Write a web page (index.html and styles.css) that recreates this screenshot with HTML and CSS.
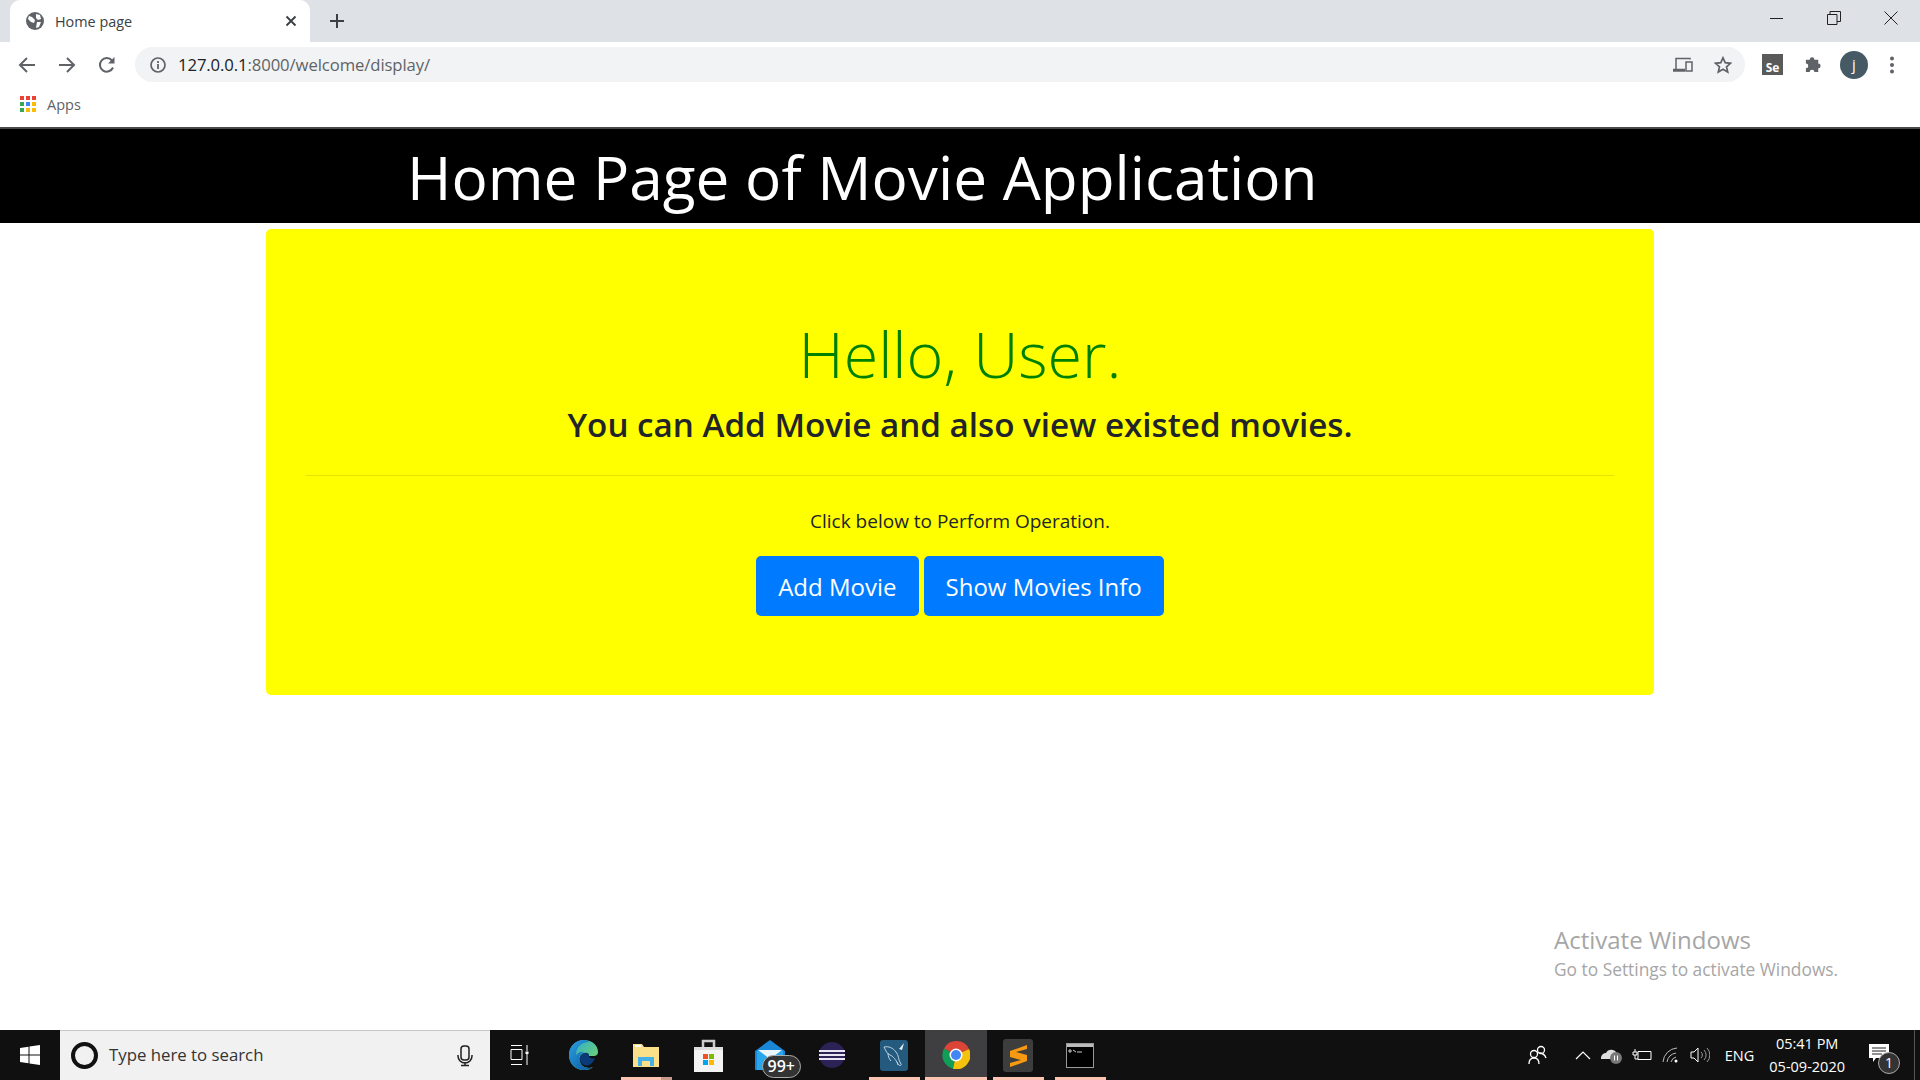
FILE: index.html
```html
<!DOCTYPE html>
<html lang="en">
<head>
  <meta charset="UTF-8">
  <title>Home page</title>
  <link rel="stylesheet" href="styles.css">
</head>
<body>
  <div class="tabstrip">
    <div class="tab">
      <svg class="tab-globe" width="18" height="18" viewBox="0 0 18 18"><circle cx="9" cy="9" r="9" fill="#5f6368"/><path d="M3 4l3 1 3 3-1 3-3-1-3-3zM10 2l4 1 1 4-3 1-2-2zM11 10l4 0-2 5-3 1z" fill="#fff"/></svg>
      <span class="tab-title">Home page</span>
      <svg class="tab-close" width="12" height="12" viewBox="0 0 12 12"><path d="M1.500 1.500l9 9M10.500 1.500l-9 9" stroke="#3c4043" stroke-width="1.900"/></svg>
    </div>
    <svg class="new-tab" width="16" height="16" viewBox="0 0 16 16"><path d="M8 1v14M1 8h14" stroke="#3c4043" stroke-width="2"/></svg>
    <div class="window-btns">
      <svg width="14" height="14" viewBox="0 0 14 14"><path d="M0 7.500h13" stroke="#222" stroke-width="1"/></svg>
      <svg width="14" height="14" viewBox="0 0 14 14"><path d="M.5 3.500h9.500v10H.5zM3 3.500V.5h10.500v10H10" fill="none" stroke="#222"/></svg>
      <svg width="14" height="14" viewBox="0 0 14 14"><path d="M.5.5l13 13M13.500.5l-13 13" stroke="#222"/></svg>
    </div>
  </div>

  <div class="toolbar">
    <svg class="nav-icon" width="18" height="18" viewBox="0 0 18 18"><path d="M17 9H2M9 2L2 9l7 7" fill="none" stroke="#5f6368" stroke-width="2"/></svg>
    <svg class="nav-icon" width="18" height="18" viewBox="0 0 18 18"><path d="M1 9h15M9 2l7 7-7 7" fill="none" stroke="#5f6368" stroke-width="2"/></svg>
    <svg class="nav-icon" width="18" height="18" viewBox="0 0 18 18"><path d="M15 11.500A6.800 6.800 0 1 1 14 4.500" fill="none" stroke="#5f6368" stroke-width="2"/><path d="M16.500 1v6.500H10z" fill="#5f6368"/></svg>
    <div class="omnibox">
      <svg width="16" height="16" viewBox="0 0 16 16"><circle cx="8" cy="8" r="7" fill="none" stroke="#5f6368" stroke-width="1.700"/><path d="M8 7v5M8 4v2" stroke="#5f6368" stroke-width="1.800"/></svg>
      <span class="url"><span class="url-host">127.0.0.1</span>:8000/welcome/display/</span>
      <span class="omni-icons">
        <svg width="20" height="16" viewBox="0 0 20 16"><path d="M17 2.500V1.500H3v11H.5v1.500H12M3 12.500h9" fill="none" stroke="#5f6368" stroke-width="1.500"/><rect x="13" y="5" width="6" height="9" fill="none" stroke="#5f6368" stroke-width="1.500"/></svg>
        <svg width="18" height="18" viewBox="0 0 18 18"><path d="M9 1.800l2.200 4.900 5.300.6-4 3.500 1.200 5.300L9 13.300l-4.700 2.800 1.200-5.300-4-3.500 5.300-.6z" fill="none" stroke="#5f6368" stroke-width="1.700"/></svg>
      </span>
    </div>
    <div class="ext-icons">
      <span class="se-icon">Se</span>
      <svg width="20" height="20" viewBox="0 0 20 20"><path d="M2 6h4a2.500 2.500 0 0 1 5 0h4v4a2.500 2.500 0 0 1 0 5v4h-4a2.500 2.500 0 0 0-5 0H2v-4a2.500 2.500 0 0 0 0-5z" fill="#5f6368" transform="translate(1 -1) scale(.95)"/></svg>
      <span class="avatar">j</span>
      <svg width="6" height="18" viewBox="0 0 6 18"><circle cx="3" cy="2.500" r="2" fill="#5f6368"/><circle cx="3" cy="9" r="2" fill="#5f6368"/><circle cx="3" cy="15.500" r="2" fill="#5f6368"/></svg>
    </div>
  </div>

  <div class="bookmarks">
    <span class="apps-grid">
      <i class="r"></i><i class="r"></i><i class="r"></i>
      <i class="g"></i><i class="b"></i><i class="y"></i>
      <i class="g"></i><i class="y"></i><i class="y"></i>
    </span>
    <span class="apps-label">Apps</span>
  </div>

  <main class="page">
    <header class="site-header">
      <h1>Home Page of Movie Application</h1>
    </header>
    <section class="jumbotron">
      <h2 class="hello">Hello, User.</h2>
      <p class="lead">You can Add Movie and also view existed movies.</p>
      <hr>
      <p class="hint">Click below to Perform Operation.</p>
      <div class="buttons">
        <a class="btn">Add Movie</a>
        <a class="btn">Show Movies Info</a>
      </div>
    </section>
    <div class="watermark">
      <div class="wm-title">Activate Windows</div>
      <div class="wm-sub">Go to Settings to activate Windows.</div>
    </div>
  </main>

  <footer class="taskbar">
    <div class="start">
      <svg width="20" height="20" viewBox="0 0 20 20"><path d="M0 3l8.500-1.200v7.700H0zM9.500 1.600L20 0v9.500H9.500zM0 10.500h8.500v7.700L0 17zM9.500 10.500H20V20L9.500 18.400z" fill="#fff"/></svg>
    </div>
    <div class="search">
      <span class="cortana"></span>
      <span class="search-text">Type here to search</span>
      <svg width="16" height="22" viewBox="0 0 16 22"><rect x="4" y="1" width="8" height="14" rx="3" fill="none" stroke="#222" stroke-width="1.500"/><path d="M1 10v1a7 7 0 0 0 14 0v-1M8 17v3M4 20.500h8" fill="none" stroke="#222" stroke-width="1.500"/></svg>
    </div>
    <div class="task-icon task-view">
      <svg width="20" height="20" viewBox="0 0 20 20"><path d="M1 .5h11M1 4.500h11v10H1zM1 19.500h11M17 0v6M17 9v11" fill="none" stroke="#fff"/><rect x="15.500" y="6.500" width="3" height="2.500" fill="#fff"/></svg>
    </div>
    <div class="task-icon">
      <svg width="30" height="30" viewBox="0 0 30 30">
        <defs>
          <linearGradient id="edge-body" x1="0" y1="0" x2="1" y2="1"><stop offset="0" stop-color="#2a9fe0"/><stop offset="1" stop-color="#0b57a0"/></linearGradient>
          <linearGradient id="edge-top" x1="0" y1="0" x2="1" y2="1"><stop offset="0" stop-color="#28a6d8"/><stop offset="1" stop-color="#7ee05a"/></linearGradient>
        </defs>
        <path d="M15 0C6 0 0 7 0 15c0 9 7 15 15 15 4 0 7-1 9-3-4 2-11 1-13-5-2-5 2-9 6-9 3 0 3 2 3 3 3 0 9 1 9-4C29 5 23 0 15 0z" fill="url(#edge-top)"/>
        <path d="M15 0C7 0 0 6 0 15c0 9 7 15 15 15 4 0 7-1 9-3-4 2-11 1-13-5-2-5 1-9 4-10-2-1-6 0-8 3 0-8 6-13 12-13 2 0-1-2-4-2z" fill="url(#edge-body)"/>
        <path d="M11 20c-1-5 3-8 7-7 2 1 2 2 2 3 0 2 4 3 6 2-2 6-7 9-11 7-2-1-4-3-4-5z" fill="#0a3a78"/>
      </svg>
    </div>
    <div class="task-icon running grouped">
      <svg width="28" height="25" viewBox="0 0 28 25"><path d="M1 1h9l2 3h15v20H1z" fill="#fbe08a"/><path d="M3 2h6v2H3z" fill="#fff"/><path d="M6 14h16v9h-4v-5h-8v5H6z" fill="#45b1e8"/></svg>
    </div>
    <div class="task-icon">
      <svg width="29" height="33" viewBox="0 0 29 33"><path d="M9 9V2h11v7" fill="none" stroke="#ccc" stroke-width="2.500"/><path d="M0 8h29v25H0z" fill="#f4f4f4"/><path d="M0 8h29v3H0z" fill="#ddd"/><path d="M9 15h5v5H9z" fill="#f25022"/><path d="M15 15h5v5h-5z" fill="#7fba00"/><path d="M9 21h5v5H9z" fill="#00a4ef"/><path d="M15 21h5v5h-5z" fill="#ffb900"/></svg>
    </div>
    <div class="task-icon mail">
      <svg width="30" height="30" viewBox="0 0 30 30"><path d="M0 11L15 0l15 11v19H0z" fill="#1a86d8"/><path d="M2 11h26v19H2z" fill="#2aa7ec"/><path d="M3 10h24L15 19z" fill="#eaf6fd"/></svg>
      <span class="mail-badge">99+</span>
    </div>
    <div class="task-icon eclipse">
      <svg width="29" height="30" viewBox="0 0 29 30"><path d="M14 0a15 15 0 0 0 0 30 15 15 0 0 1 0-30z" fill="#f7941e"/><circle cx="16" cy="15" r="13" fill="#2c2255"/><path d="M3 11h26M3 15h26M3 19h26" stroke="#e8e6f4" stroke-width="2"/></svg>
    </div>
    <div class="task-icon running">
      <svg width="28" height="31" viewBox="0 0 28 31"><rect width="28" height="31" rx="3" fill="#235a7e"/><path d="M4 7c5-1 9 1 12 5 3 3 2 8 5 12 1 2-2 2-3 0-2-4-5-8-8-9-3-1-4-4-6-8zM8 13c0 3 1 6 3 8M17 22l1 3" fill="none" stroke="#bcd4e4" stroke-width="1"/><path d="M19 9l5-6-2 7z" fill="#e6f0f6"/></svg>
    </div>
    <div class="task-icon active running">
      <svg width="28" height="28" viewBox="0 0 28 28"><path d="M14 14L2 7.500A14 14 0 0 1 27 8z" fill="#db4437"/><path d="M14 14L2 7.500A14 14 0 0 0 11 27.700z" fill="#0f9d58"/><path d="M14 14l13-6A14 14 0 0 1 11 27.700z" fill="#f4c20d"/><circle cx="14" cy="14" r="6.500" fill="#fff"/><circle cx="14" cy="14" r="5" fill="#4285f4"/></svg>
    </div>
    <div class="task-icon running">
      <svg width="30" height="33" viewBox="0 0 30 33"><rect width="30" height="33" rx="3" fill="#3d3d3d"/><path d="M24 6L7 12v6l11 3-11 3v4l17-6v-6L13 13l11-3z" fill="#f79a12"/></svg>
    </div>
    <div class="task-icon running">
      <svg width="28" height="25" viewBox="0 0 28 25"><rect x=".5" y=".5" width="27" height="24" fill="#000" stroke="#999"/><path d="M1 1h26v3H1z" fill="#bbb"/><path d="M3 7h2v2H3zM7 7l3 2M11 9h5" stroke="#ccc" fill="none"/></svg>
    </div>
    <div class="tray">
      <svg width="20" height="20" viewBox="0 0 20 20"><circle cx="13" cy="5" r="3.500" fill="none" stroke="#fff" stroke-width="1.300"/><circle cx="6" cy="9" r="3.500" fill="none" stroke="#fff" stroke-width="1.300"/><path d="M1 19c0-4 2-6 5-6s5 2 5 6M11 8c3 0 6 2 7 5" fill="none" stroke="#fff" stroke-width="1.300"/></svg>
      <svg class="tray-chevron" width="16" height="10" viewBox="0 0 16 10"><path d="M1 9l7-7 7 7" fill="none" stroke="#fff" stroke-width="1.200"/></svg>
      <svg width="21" height="18" viewBox="0 0 21 18"><path d="M0 12a5 5 0 0 1 5-5 6 6 0 0 1 11 1v5H0z" fill="#ddd"/><circle cx="15" cy="12" r="6" fill="#777"/><path d="M13.500 9.500v5M16.500 9.500v5" stroke="#fff"/></svg>
      <svg width="20" height="14" viewBox="0 0 20 14"><path d="M6 3.500h13v8H6zM3 1v3M1 4h4v3H1zM3 7v4h3" fill="none" stroke="#fff"/></svg>
      <svg width="18" height="18" viewBox="0 0 18 18"><path d="M1 16A15 15 0 0 1 15 2M5 16a11 11 0 0 1 9-9M9 16a7 7 0 0 1 5-5" fill="none" stroke="#bbb"/><circle cx="14" cy="15" r="1.500" fill="#fff"/></svg>
      <svg width="20" height="16" viewBox="0 0 20 16"><path d="M1 5h3l4-4v14l-4-4H1z" fill="none" stroke="#fff"/><path d="M11 5a4 4 0 0 1 0 6M14 3a7 7 0 0 1 0 10M17 1a10 10 0 0 1 0 14" fill="none" stroke="#999"/></svg>
      <span class="tray-lang">ENG</span>
      <div class="clock"><span>05:41 PM</span><span>05-09-2020</span></div>
      <div class="notify">
        <svg width="20" height="18" viewBox="0 0 20 18"><path d="M0 0h20v14H7l-3 4v-4H0z" fill="#fff"/><path d="M3 4h14M3 7h14M3 10h10" stroke="#222"/></svg>
        <span class="notify-badge">1</span>
      </div>
    </div>
    <span class="show-desktop"></span>
  </footer>
</body>
</html>
```

FILE: styles.css
```css
html, body {
  margin: 0;
  height: 100%;
}

body {
  display: flex;
  flex-direction: column;
  height: 1080px;
  overflow: hidden;
  font-family: "Open Sans", "Noto Sans", sans-serif;
  background: #fff;
}

/* browser chrome */
.tabstrip {
  height: 42px;
  background: #dee1e6;
  display: flex;
  align-items: center;
  flex-shrink: 0;
}

.tab {
  width: 300px;
  height: 42px;
  margin-left: 10px;
  background: #fff;
  border-radius: 10px 10px 0 0;
  display: flex;
  align-items: center;
  box-sizing: border-box;
  padding: 0 13px 0 16px;
}

.tab-title {
  margin-left: 11px;
  font-size: 14.400px;
  color: #3c4043;
  flex: 1;
}

.new-tab {
  margin-left: 19px;
}

.window-btns {
  margin-left: auto;
  margin-right: 22px;
  display: flex;
  gap: 43px;
  margin-top: -6px;
}

.toolbar {
  height: 43px;
  display: flex;
  align-items: center;
  flex-shrink: 0;
  padding: 2px 0 0 18px;
  box-sizing: border-box;
}

.nav-icon {
  margin-right: 22px;
}

.omnibox {
  margin-left: -3px;
  width: 1610px;
  height: 35px;
  border-radius: 18px;
  background: #f1f3f4;
  display: flex;
  align-items: center;
  box-sizing: border-box;
  padding: 0 13px 0 15px;
}

.url {
  margin-left: 12px;
  font-size: 16.700px;
  color: #5f6368;
  letter-spacing: -.1px;
}

.url-host {
  color: #202124;
}

.omni-icons {
  margin-left: auto;
  display: flex;
  align-items: center;
  gap: 21px;
}

.ext-icons {
  margin-left: 17px;
  display: flex;
  align-items: center;
  gap: 20px;
}

.se-icon {
  width: 21px;
  height: 21px;
  background: #5a5a5a;
  color: #fff;
  font-size: 12px;
  font-weight: 700;
  line-height: 27px;
  text-align: center;
  overflow: hidden;
}

.avatar {
  width: 28px;
  height: 28px;
  border-radius: 50%;
  background: #455a64;
  color: #fff;
  font-size: 15px;
  line-height: 27px;
  text-align: center;
  margin-left: -3px;
  margin-right: 1px;
}

.bookmarks {
  height: 42px;
  display: flex;
  align-items: center;
  flex-shrink: 0;
  padding: 0 0 4px 20px;
  box-sizing: border-box;
  margin-bottom: 2px;
  box-shadow: 0 2px 0 #4a4a4a;
}

.apps-grid {
  display: grid;
  grid-template-columns: repeat(3, 4px);
  grid-auto-rows: 4px;
  gap: 2px;
}

.apps-grid i { display: block; }
.apps-grid .r { background: #ea4335; }
.apps-grid .g { background: #34a853; }
.apps-grid .b { background: #4285f4; }
.apps-grid .y { background: #fbbc05; }

.apps-label {
  margin-left: 11px;
  font-size: 14.500px;
  color: #5f6368;
}

/* page */
.page {
  flex: 1;
  position: relative;
}

.site-header {
  height: 94px;
  box-sizing: border-box;
  background: #000;
  display: flex;
  align-items: center;
  padding: 2px 0 0 407px;
}

.site-header h1 {
  margin: 0;
  color: #fff;
  font-size: 60.300px;
  font-weight: 400;
  white-space: nowrap;
}

.jumbotron {
  width: 1388px;
  height: 466px;
  margin: 6px auto 0;
  background: #ff0;
  border-radius: 5px;
  box-sizing: border-box;
  padding: 0 40px;
  text-align: center;
}

.hello {
  margin: 0;
  padding-top: 83px;
  font-size: 62.800px;
  line-height: 84px;
  font-weight: 300;
  color: #008000;
}

.lead {
  margin: 0;
  padding-top: 3px;
  font-size: 33.200px;
  line-height: 52px;
  font-weight: 600;
  color: #212529;
}

hr {
  margin: 24px 0 0;
  border: 0;
  border-top: 1px solid rgba(0, 0, 0, .1);
}

.hint {
  margin: 0;
  padding-top: 31px;
  font-size: 19px;
  line-height: 28px;
  color: #212529;
}

.buttons {
  margin-top: 21px;
  display: flex;
  justify-content: center;
  gap: 5px;
}

.btn {
  height: 60px;
  padding: 0 22px;
  background: #007bff;
  border-radius: 5px;
  color: #fff;
  font-size: 24px;
  line-height: 62px;
}

.watermark {
  position: absolute;
  left: 1554px;
  top: 795px;
  color: #a6a6a6;
}

.wm-title {
  font-size: 24px;
  line-height: 32px;
}

.wm-sub {
  font-size: 17.350px;
  line-height: 27px;
}

/* taskbar */
.taskbar {
  height: 50px;
  flex-shrink: 0;
  background: #101010;
  display: flex;
  align-items: center;
  color: #fff;
}

.start {
  width: 60px;
  display: flex;
  justify-content: center;
}

.search {
  width: 430px;
  height: 50px;
  background: #f1f1f1;
  border-top: 1px solid #c8c8c8;
  box-sizing: border-box;
  display: flex;
  align-items: center;
  padding: 0 17px 0 11px;
}

.cortana {
  width: 27px;
  height: 27px;
  box-sizing: border-box;
  border: 4px solid #111;
  border-radius: 50%;
}

.search-text {
  margin-left: 11px;
  flex: 1;
  font-size: 16.800px;
  line-height: 22px;
  padding-bottom: 1px;
  color: #333;
}

.task-icon {
  width: 62px;
  height: 50px;
  display: flex;
  align-items: center;
  justify-content: center;
  position: relative;
  box-sizing: border-box;
}

.task-view {
  width: 63px;
  padding-right: 4px;
}

.eclipse {
  padding-right: 4px;
}

.running::after {
  content: "";
  position: absolute;
  left: 6px;
  right: 5px;
  bottom: 0;
  height: 3px;
  background: #fbc4b2;
}

.grouped::after {
  background: linear-gradient(90deg, #fbc4b2 78%, #c99a8b 78%);
}

.active {
  background: #3f3f41;
}

.active::after {
  left: 0;
  right: 0;
}

.mail-badge {
  position: absolute;
  right: 0;
  bottom: 2px;
  padding: 0 5px;
  border-radius: 12px;
  background: #333;
  border: 1px solid #aaa;
  font-size: 16px;
  font-weight: 600;
  line-height: 21px;
}

.tray {
  margin-left: auto;
  display: flex;
  align-items: center;
  gap: 10px;
  padding-right: 25px;
}

.tray-chevron {
  margin-left: 17px;
}

.tray-lang {
  margin-left: 5px;
  font-size: 14.500px;
}

.clock {
  display: flex;
  flex-direction: column;
  align-items: center;
  font-size: 14.500px;
  line-height: 23px;
  margin-left: 5px;
}

.notify {
  position: relative;
  margin-left: 14px;
}

.notify-badge {
  position: absolute;
  left: 9px;
  top: 8px;
  width: 20px;
  height: 20px;
  border-radius: 50%;
  background: #333;
  border: 1px solid #aaa;
  text-align: center;
  font-size: 14px;
  line-height: 20px;
}

.show-desktop {
  width: 5px;
  height: 50px;
  border-left: 1px solid #555;
}
```
